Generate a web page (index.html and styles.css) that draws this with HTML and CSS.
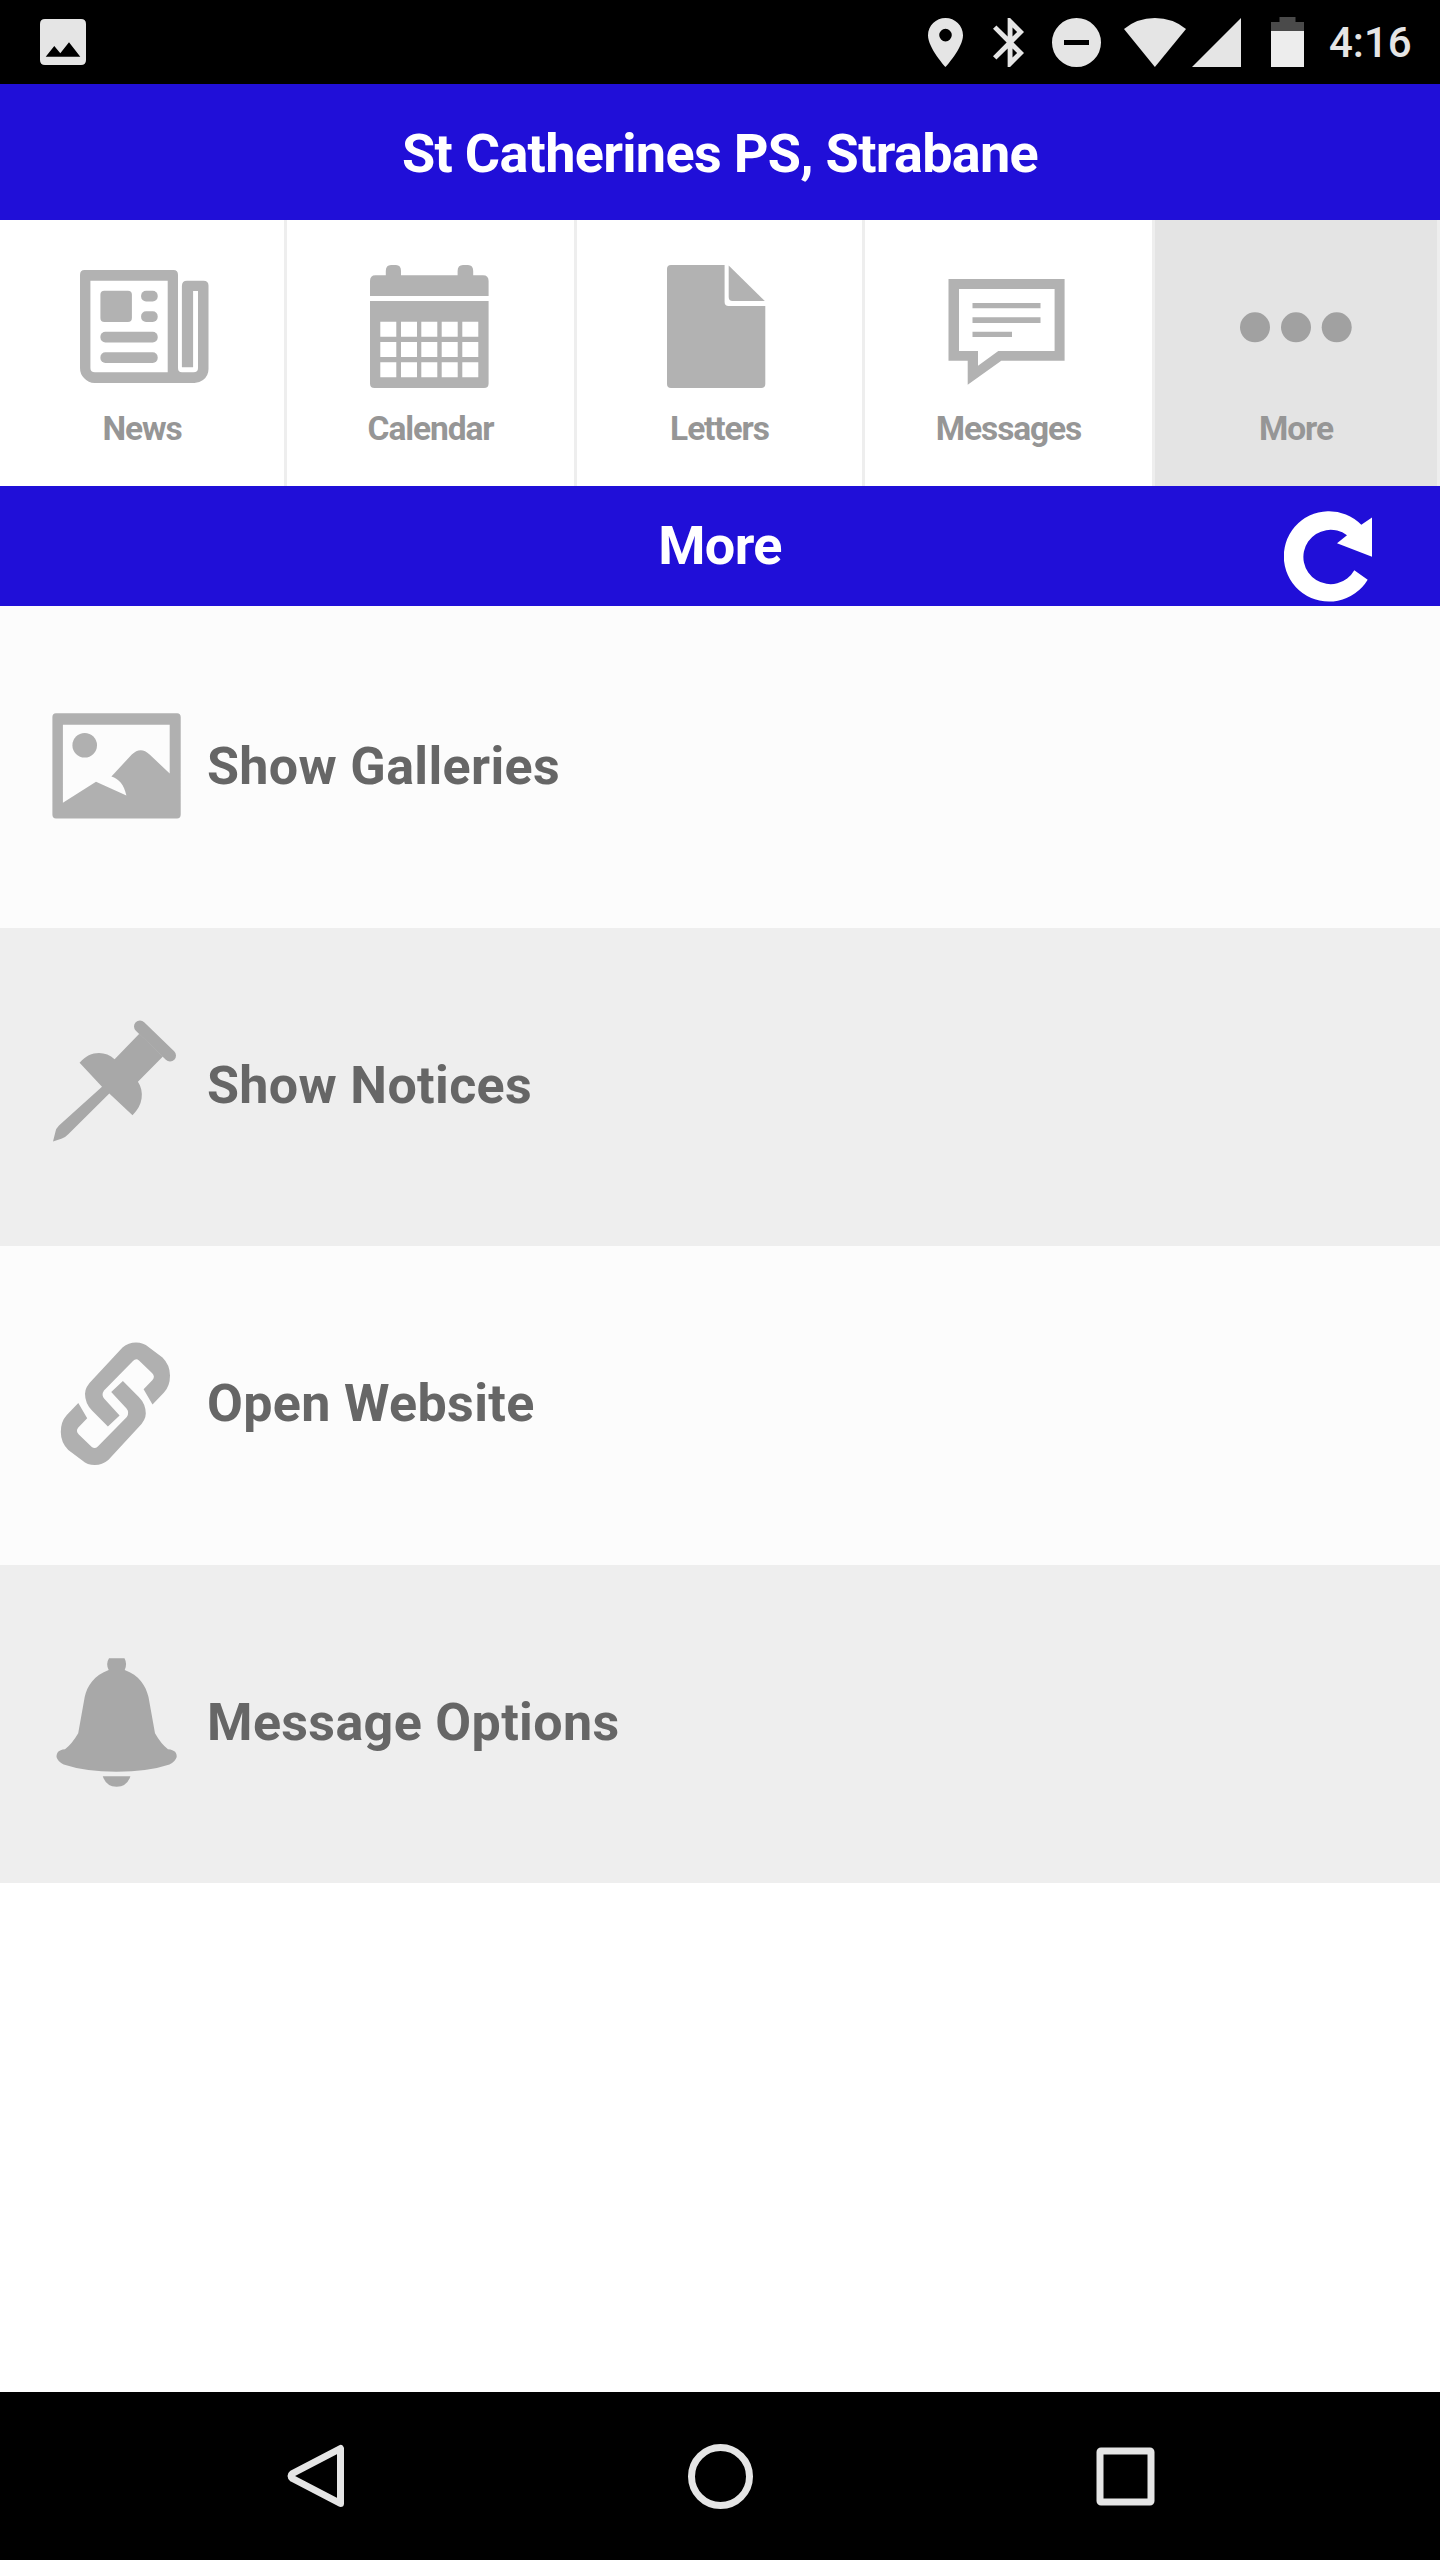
FILE: index.html
```html
<!DOCTYPE html>
<html lang="en">
<head>
  <meta charset="UTF-8">
  <meta name="viewport" content="width=device-width, initial-scale=1.0">
  <title>St Catherines PS, Strabane</title>
  <link rel="stylesheet" href="styles.css">
</head>
<body>
  <div class="status-bar">
    <svg class="status-photo" viewBox="40 19 46 46" width="46" height="46">
      <path fill-rule="evenodd" d="M45 19H81Q86 19 86 24V60Q86 65 81 65H45Q40 65 40 60V24Q40 19 45 19ZM45.7 56.7H80.3L69 42.3L60.3 53.3L54.3 46Z"/>
    </svg>
    <div class="status-icons">
      <svg viewBox="927 17 37 51" width="37" height="51">
        <path fill-rule="evenodd" d="M945.5 18C936 18 928 25.6 928 35.2C928 48 945.5 67 945.5 67C945.5 67 963 48 963 35.2C963 25.6 955 18 945.5 18ZM945.5 28.8A6.3 6.3 0 1 1 945.5 41.4A6.3 6.3 0 1 1 945.5 28.8Z"/>
      </svg>
      <svg class="bluetooth" viewBox="5 2 12.71 20" width="31" height="49">
        <path d="M17.71 7.71L12 2h-1v7.59L6.41 5 5 6.41 10.59 12 5 17.59 6.41 19 11 14.41V22h1l5.71-5.71-4.3-4.29 4.3-4.29zM13 5.83l1.88 1.88L13 9.59V5.83zm1.88 10.46L13 18.17v-3.76l1.88 1.88z"/>
      </svg>
      <svg class="dnd" viewBox="0 0 49 49" width="49" height="49">
        <path fill-rule="evenodd" d="M24.5 0A24.5 24.5 0 1 1 24.5 49A24.5 24.5 0 1 1 24.5 0ZM12 22V27H37V22Z"/>
      </svg>
      <svg class="wifi" viewBox="1124 17 62 49" width="62" height="49">
        <path d="M1154.9 66L1124 28Q1137 17 1154.9 17T1186 28Z"/>
      </svg>
      <svg class="signal" viewBox="0 0 49 49" width="49" height="49">
        <path d="M0 49H49V0Z"/>
      </svg>
      <svg class="battery" viewBox="0 0 33 50" width="33" height="50">
        <path class="battery-empty" d="M8.5 0H24.5V5H33V14H0V5H8.5Z"/>
        <path class="battery-level" d="M0 14H33V50H0Z"/>
      </svg>
      <span class="clock">4:16</span>
    </div>
  </div>

  <header class="school-name">St Catherines PS, Strabane</header>

  <nav class="tabs">
    <div class="tab">
      <svg viewBox="75.5 260 133 133" width="133" height="133">
        <path fill-rule="evenodd" d="M84 270H173Q177.5 270 177.5 275V368Q177.5 372.3 181.5 372.3H193Q197.5 372.3 197.5 368V291H192.6V367.3H181.4V286Q181.4 280.7 186.5 280.7H203Q208 280.7 208 285.5V369Q208 376 202.5 380Q198.5 383 194 383H94Q88 383 83.5 378Q79.5 374 79.5 368V275Q79.5 270 84 270ZM89.9 280.7V368Q89.9 372.3 94.5 372.3H167.2V280.7Z"/>
        <rect x="99.9" y="290.7" width="31.5" height="31.3" rx="4"/>
        <rect x="140.6" y="290.7" width="16.6" height="10.7" rx="5"/>
        <rect x="140.6" y="311.3" width="16.6" height="10.7" rx="5"/>
        <rect x="99.9" y="331.7" width="57.3" height="10.7" rx="5"/>
        <rect x="99.9" y="352.3" width="57.3" height="10.7" rx="5"/>
      </svg>
      <span>News</span>
    </div>
    <div class="tab">
      <svg viewBox="364 260 133 133" width="133" height="133">
        <path d="M370 296V281Q370 275.3 375.5 275.3H385.8V271Q385.8 265 391 265H396Q401 265 401 271V275.3H457.6V271Q457.6 265 463 265H468Q473.2 265 473.2 271V275.3H483Q488.6 275.3 488.6 281V296Z"/>
        <path fill-rule="evenodd" d="M370 301H488.6V383.5Q488.6 388 484 388H374.5Q370 388 370 383.5ZM380.3 321.7V336.7H396.3V321.7ZM401 321.7V336.7H417V321.7ZM421.3 321.7V336.7H437.3V321.7ZM441.7 321.7V336.7H457.7V321.7ZM462.3 321.7V336.7H478.3V321.7ZM380.3 342V357H396.3V342ZM401 342V357H417V342ZM421.3 342V357H437.3V342ZM441.7 342V357H457.7V342ZM462.3 342V357H478.3V342ZM380.3 362.3V377.3H396.3V362.3ZM401 362.3V377.3H417V362.3ZM421.3 362.3V377.3H437.3V362.3ZM441.7 362.3V377.3H457.7V362.3ZM462.3 362.3V377.3H478.3V362.3Z"/>
      </svg>
      <span>Calendar</span>
    </div>
    <div class="tab">
      <svg viewBox="653 260 133 133" width="133" height="133">
        <path d="M671 265H724.6V302Q724.6 306 728.6 306H765.3V384Q765.3 388 761.3 388H671Q667 388 667 384V269Q667 265 671 265Z"/>
        <path d="M728.7 265.5L764.8 301H732.5Q728.7 301 728.7 297Z"/>
      </svg>
      <span>Letters</span>
    </div>
    <div class="tab">
      <svg viewBox="942 260 133 133" width="133" height="133">
        <path fill-rule="evenodd" d="M948.5 279H1064.6V360.7H1001.3L967.7 384.7V360.7H948.5ZM959 289V351H978V365.7L998.3 351H1054.6V289Z"/>
        <path d="M972.5 303H1040.5V308.3H972.5ZM972.5 317.3H1040.5V323H972.5ZM972.5 331.7H1012V337H972.5Z"/>
      </svg>
      <span>Messages</span>
    </div>
    <div class="tab active">
      <svg viewBox="1230 260 133 133" width="133" height="133">
        <circle cx="1255" cy="327.3" r="15"/>
        <circle cx="1296" cy="327.3" r="15"/>
        <circle cx="1336.7" cy="327.3" r="15"/>
      </svg>
      <span>More</span>
    </div>
  </nav>

  <div class="page-title">
    <h1>More</h1>
    <svg class="refresh" viewBox="1284 511 88 91" width="88" height="91">
      <path d="M1367.7 579.7A45.2 45.2 0 1 1 1361.3 524.7L1372 517.5V556.7L1337 543.3L1347 535.3A27.2 27.2 0 1 0 1354.3 570.3Z"/>
    </svg>
  </div>

  <main class="options">
    <div class="option galleries">
      <svg viewBox="50 695.5 136 140" width="136" height="140">
        <path fill-rule="evenodd" d="M56 712.7H177Q180.7 712.7 180.7 716.5V814Q180.7 818 177 818H56Q52.4 818 52.4 814V716.5Q52.4 712.7 56 712.7ZM62.9 724.3V802.3L96 781.3L126.4 795C124 784 119 778.5 111.4 776L131.8 754Q140.7 745.5 149.6 754L169.7 773V724.3Z"/>
        <circle cx="84.7" cy="744.7" r="12.3"/>
      </svg>
      <span>Show Galleries</span>
    </div>
    <div class="option shaded notices">
      <svg viewBox="50 1014.5 136 140" width="136" height="140">
        <path d="M139.3 1034.3L114.6 1059.7C105 1051 90 1051 79.6 1063.3L102 1087.3L59 1126Q56 1129 55.5 1132L53 1142L62 1139Q65 1138 68 1135L109.3 1094L132.5 1115.7C143 1106 144.5 1092 137.9 1082.3L162.9 1057Z"/>
        <path class="pin-head" d="M140 1027L170 1056"/>
      </svg>
      <span>Show Notices</span>
    </div>
    <div class="option website">
      <svg viewBox="50 1332.5 136 140" width="136" height="140">
        <path id="link-half" d="M152.5 1404L164 1392Q170 1385.5 170 1375Q170 1364.5 162.5 1357L148.5 1346.5Q143.500 1342 136 1342Q128.5 1342 122.5 1347L92.5 1379.3Q85 1386.5 85 1393.3Q85 1403 92 1410L107.9 1426L119.6 1415L104.3 1398.3Q101 1394.5 104 1390L133 1360.5Q136 1357.5 139 1360L152 1372.5Q155.5 1376 152.5 1379.5L143.6 1388.7Z"/>
        <use href="#link-half" transform="rotate(180 115.4 1403.2)"/>
      </svg>
      <span>Open Website</span>
    </div>
    <div class="option shaded message-options">
      <svg viewBox="50 1651 136 140" width="136" height="140">
        <path d="M109 1658.3H124.5Q127.5 1664 124.7 1670C139 1675 146 1686 148.5 1697L155 1733.3Q161 1744 168 1749.3C175 1750 177 1753 176.7 1757Q175 1762 169.5 1764.5Q148 1771.7 116.6 1771.7T63.7 1764.5Q58 1762 56.5 1757C56.5 1753 58 1750 65 1749.3Q72 1744 78.2 1733.3L84.7 1697C87 1686 94.5 1675 108.7 1670Q105.5 1664 109 1658.3Z"/>
        <path d="M102.8 1776.3H130.4Q127 1786.7 116.6 1786.7T102.8 1776.3Z"/>
      </svg>
      <span>Message Options</span>
    </div>
  </main>

  <footer class="nav-bar">
    <svg viewBox="0 0 66 66" width="66" height="66">
      <path d="M58.5 5.5V60.5L10.5 35.5Q7.5 33 10.5 30.5Z"/>
    </svg>
    <svg viewBox="0 0 66 66" width="66" height="66">
      <circle cx="33.5" cy="33.5" r="29"/>
    </svg>
    <svg viewBox="0 0 66 66" width="66" height="66">
      <rect x="8" y="8" width="51" height="51" rx="1"/>
    </svg>
  </footer>
</body>
</html>
```
FILE: styles.css
```css
* {
  margin: 0;
  padding: 0;
  box-sizing: border-box;
}
body {
  font-family: Roboto, "Liberation Sans", sans-serif;
  background: #fff;
  width: 1440px;
  height: 2560px;
  display: flex;
  flex-direction: column;
}
svg {
  display: block;
  flex-shrink: 0;
}
.status-bar {
  height: 84px;
  background: #000;
  color: #e5e5e5;
  fill: #e5e5e5;
  display: flex;
  justify-content: space-between;
  align-items: center;
  padding: 0 28px 0 40px;
}
.status-icons {
  display: flex;
  align-items: center;
}
.bluetooth {
  margin-left: 29px;
}
.dnd {
  margin-left: 28px;
}
.wifi {
  margin-left: 23px;
}
.signal {
  margin-left: 6px;
}
.battery {
  margin-left: 30px;
}
.battery-empty {
  fill: #4a4a4a;
}
.battery-level {
  fill: #ededed;
}
.clock {
  width: 83px;
  margin-left: 25px;
  padding-top: 2px;
  font-size: 42px;
  font-weight: 500;
  line-height: 50px;
}
.school-name {
  height: 136px;
  background: #200fd8;
  color: #fff;
  font-size: 54px;
  font-weight: bold;
  line-height: 139px;
  letter-spacing: -0.7px;
  text-align: center;
}
.tabs {
  height: 266px;
  display: grid;
  grid-template-columns: 287px 290px 288px 290px 285px;
}
.tab {
  display: flex;
  flex-direction: column;
  align-items: center;
  padding-top: 40px;
  border-right: 3px solid #eee;
  color: #969696;
  fill: #b2b2b2;
  font-size: 33.5px;
  font-weight: bold;
  line-height: 40px;
  letter-spacing: -1.1px;
}
.tab span {
  margin-top: 16px;
}
.tab.active {
  background: #e4e4e4;
  fill: #a1a1a1;
}
.page-title {
  height: 120px;
  background: #200fd8;
  color: #fff;
  fill: #fff;
  display: grid;
  grid-template-columns: 1fr auto 1fr;
  align-items: start;
}
.page-title h1 {
  grid-column: 2;
  font-size: 54px;
  line-height: 120px;
  letter-spacing: -0.7px;
}
.refresh {
  justify-self: end;
  margin: 25px 68px 0 0;
}
.option {
  height: 319px;
  display: flex;
  align-items: center;
  gap: 21px;
  padding: 0 0 6px 50px;
  background: #fcfcfc;
  color: #666;
  fill: #b0b0b0;
  font-size: 52px;
  font-weight: bold;
  letter-spacing: 0.35px;
}
.option span {
  padding-top: 2px;
}
.option.shaded {
  height: 318px;
  background: #eee;
  fill: #a8a8a8;
}
.option.galleries {
  height: 322px;
  padding-bottom: 3px;
}
.pin-head {
  stroke: #a8a8a8;
  stroke-width: 12;
  stroke-linecap: round;
}
.nav-bar {
  height: 168px;
  margin-top: auto;
  background: #000;
  display: flex;
  justify-content: center;
  gap: 339px;
  padding-top: 51px;
}
.nav-bar svg {
  fill: none;
  stroke: #e5e5e5;
  stroke-width: 7;
  stroke-linejoin: round;
}
```
